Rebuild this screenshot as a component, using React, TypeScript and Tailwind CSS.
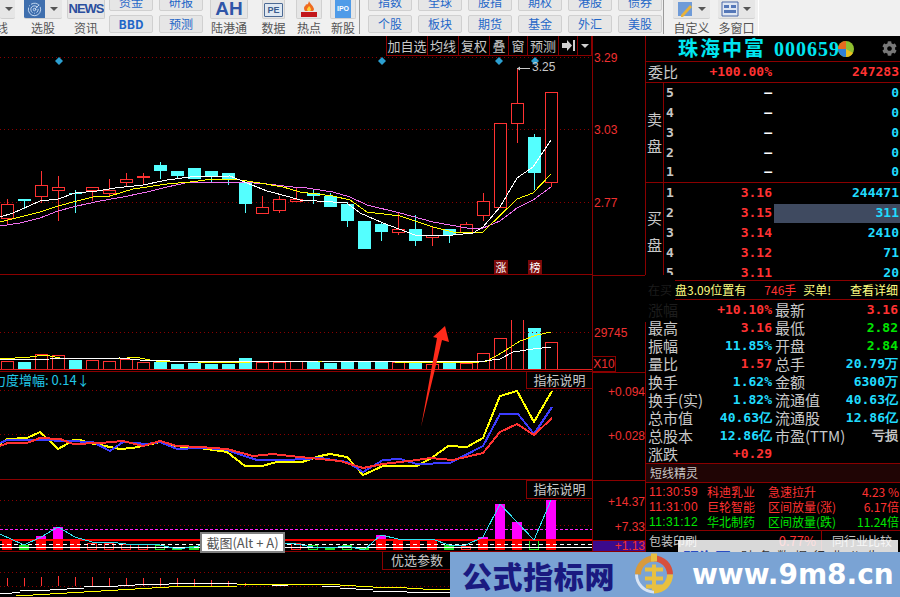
import { Radar } from 'lucide-react';
import { FaCog } from 'react-icons/fa';

type Pt = [number, number];

const CJK = "font-['Noto_Sans_CJK_SC','Liberation_Sans',sans-serif]";
const NUM = "font-['DejaVu_Sans_Mono','Liberation_Mono',monospace] font-bold";

// x, wickTop, wickBottom, bodyTop, bodyBottom, up
const CANDLES: [number, number, number, number, number, boolean][] = [
  [7, 199, 224, 204, 218, true],
  [24, 199, 209, 199, 201, false],
  [41, 171, 203, 185, 196, true],
  [58, 176, 221, 187, 190, true],
  [75, 190, 213, 193, 194, false],
  [92, 187, 201, 187, 190, true],
  [109, 179, 196, 190, 193, true],
  [126, 173, 187, 179, 182, true],
  [143, 173, 185, 176, 177, true],
  [160, 162, 179, 165, 171, false],
  [177, 171, 178, 171, 176, false],
  [194, 168, 179, 168, 179, false],
  [211, 171, 182, 171, 176, false],
  [228, 173, 185, 173, 179, false],
  [245, 182, 213, 182, 204, false],
  [262, 196, 213, 207, 213, true],
  [279, 196, 213, 199, 210, true],
  [296, 187, 200, 199, 201, true],
  [313, 190, 204, 193, 196, false],
  [330, 193, 207, 196, 207, false],
  [347, 202, 227, 204, 221, false],
  [364, 221, 249, 221, 249, false],
  [381, 222, 241, 224, 232, false],
  [398, 213, 235, 229, 232, true],
  [415, 215, 246, 229, 241, false],
  [432, 227, 246, 235, 237, true],
  [449, 229, 243, 229, 235, false],
  [466, 222, 234, 224, 232, true],
  [483, 193, 221, 201, 215, true],
  [500, 123, 207, 123, 207, true],
  [517, 68, 143, 103, 123, true],
  [534, 134, 190, 137, 173, false],
  [551, 92, 187, 92, 182, true],
];

const MA_WHITE: Pt[] = [[0, 217], [13, 213], [40, 201], [58, 199], [75, 193], [97, 191], [115, 188], [143, 185], [167, 180], [190, 177], [230, 176], [247, 183], [267, 191], [290, 197], [300, 200], [333, 202], [347, 203], [360, 213], [383, 223], [415, 235], [443, 236], [473, 233], [483, 227], [500, 207], [517, 178], [533, 167], [551, 140]];
const MA_YELLOW: Pt[] = [[0, 222], [20, 217], [40, 212], [58, 206], [77, 201], [93, 197], [110, 196], [133, 189], [167, 184], [190, 182], [213, 179], [240, 180], [260, 183], [283, 187], [300, 192], [333, 196], [350, 200], [367, 212], [400, 216], [433, 227], [453, 232], [483, 232], [517, 199], [533, 193], [551, 174]];
const MA_PINK: Pt[] = [[0, 226], [20, 223], [40, 218], [58, 211], [77, 206], [100, 201], [123, 197], [147, 192], [167, 187], [190, 182], [240, 182], [267, 184], [293, 187], [300, 187], [333, 192], [350, 197], [367, 205], [400, 213], [433, 222], [467, 228], [483, 228], [500, 221], [517, 208], [533, 200], [551, 187]];

// x, top, up
const VOLUMES: [number, number, boolean][] = [
  [7, 362, true], [24, 363, false], [41, 355, true], [58, 356, true], [75, 361, false], [92, 361, true], [109, 362, true], [126, 360, true], [143, 363, true],
  [160, 363, false], [177, 365, false], [194, 364, false], [211, 365, false], [228, 365, false], [245, 359, false], [262, 363, true], [279, 363, true], [296, 362, true],
  [313, 363, false], [330, 364, false], [347, 363, false], [364, 363, false], [381, 363, false], [398, 363, true], [415, 363, false], [432, 365, true], [449, 363, false],
  [466, 364, true], [483, 354, true], [500, 339, true], [517, 310, true], [534, 329, false], [551, 343, true],
];

const VOL_YELLOW: Pt[] = [[0, 360], [15, 359], [30, 358], [45, 356], [60, 359], [120, 360], [135, 358], [155, 362], [240, 364], [260, 362], [320, 362], [470, 364], [487, 362], [503, 353], [520, 342], [537, 336], [551, 333]];
const VOL_WHITE: Pt[] = [[0, 361], [50, 360], [120, 359], [140, 361], [200, 363], [320, 362], [477, 363], [500, 360], [513, 353], [533, 350], [551, 348]];

const LINE_YELLOW: Pt[] = [[0, 445], [7, 440], [27, 439], [40, 433], [50, 442], [58, 450], [67, 445], [73, 441], [80, 441], [90, 444], [100, 446], [120, 450], [133, 449], [147, 446], [160, 443], [173, 447], [200, 449], [227, 453], [245, 467], [262, 467], [277, 463], [302, 463], [320, 457], [330, 455], [347, 458], [363, 476], [383, 467], [417, 467], [433, 458], [448, 447], [467, 448], [483, 439], [500, 397], [517, 392], [534, 423], [552, 392]];
const LINE_BLUE: Pt[] = [[0, 444], [7, 441], [40, 441], [67, 442], [93, 443], [110, 452], [123, 443], [147, 445], [160, 443], [177, 450], [200, 449], [223, 450], [257, 461], [287, 461], [320, 459], [347, 463], [363, 473], [383, 461], [400, 460], [417, 465], [450, 464], [483, 447], [500, 415], [518, 415], [534, 435], [552, 408]];
const LINE_RED: Pt[] = [[0, 447], [8, 444], [27, 444], [40, 439], [60, 440], [73, 445], [100, 444], [123, 442], [143, 447], [160, 442], [177, 447], [200, 448], [227, 450], [253, 457], [273, 455], [290, 457], [320, 460], [340, 462], [363, 469], [383, 465], [417, 461], [430, 459], [453, 461], [483, 454], [500, 433], [517, 425], [534, 436], [552, 419]];

// x, top, kind, magenta top
type Bar = 'fill' | 'hollow' | 'green' | 'greenHollow';
const PANE4_BARS: [number, number, Bar, number?][] = [
  [7, 541, 'fill'], [24, 546, 'green'], [41, 541, 'fill', 537], [58, 541, 'fill', 528], [75, 541, 'fill'], [92, 544, 'hollow'], [109, 544, 'hollow'], [126, 545, 'hollow'], [143, 545, 'hollow'],
  [160, 546, 'greenHollow'], [177, 548, 'green'], [194, 547, 'green'], [296, 544, 'hollow'], [313, 546, 'greenHollow'], [330, 548, 'green'], [347, 546, 'greenHollow'], [364, 549, 'green'],
  [381, 541, 'fill', 536], [398, 541, 'fill'], [415, 541, 'fill'], [432, 541, 'fill'], [449, 546, 'green'], [466, 547, 'hollow'], [483, 541, 'fill', 538], [500, 541, 'fill', 505], [517, 541, 'fill', 523],
  [534, 541, 'greenHollow'], [551, 541, 'fill', 501],
];

const PANE4_LINE: Pt[] = [[0, 535], [24, 546], [41, 538], [58, 528], [75, 538], [92, 543], [109, 543], [126, 545], [143, 545], [160, 546], [177, 550], [194, 548], [211, 544], [296, 545], [313, 548], [330, 549], [347, 547], [364, 551], [381, 536], [398, 540], [432, 540], [449, 546], [466, 546], [483, 538], [500, 505], [517, 523], [534, 541], [551, 501]];

// from, to, y
const P5_WHITE: [number, number, number][] = [[0, 12, 594], [12, 20, 593], [20, 33, 591], [33, 50, 591], [50, 67, 590], [67, 84, 589], [84, 118, 587], [118, 135, 586], [135, 169, 585], [169, 237, 584], [272, 288, 586], [322, 340, 587], [340, 356, 589], [356, 373, 590], [373, 407, 592], [407, 458, 593]];
const P5_YELLOW: [number, number, number][] = [[16, 33, 596], [33, 50, 595], [50, 67, 594], [67, 84, 593], [84, 101, 592], [101, 118, 591], [118, 135, 590], [135, 152, 589], [152, 169, 588], [169, 203, 587], [203, 237, 587], [237, 288, 585], [288, 340, 585], [340, 356, 586], [356, 373, 587], [373, 407, 588], [407, 423, 589], [423, 458, 590]];
const P5_STICKS: Pt[] = [[7, 579], [24, 579], [41, 578], [58, 577], [75, 578], [92, 578], [109, 579], [126, 579], [143, 579], [160, 579], [177, 579], [194, 580], [211, 581], [228, 582], [245, 584]];

function Line({ points, color, width = 1 }: { points: Pt[]; color: string; width?: number }) {
  return <polyline points={points.map(([x, y]) => `${x},${y}`).join(' ')} fill="none" stroke={color} strokeWidth={width} shapeRendering="crispEdges" />;
}

function Dotted({ y }: { y: number }) {
  return <line x1="0" x2="592" y1={y + 0.5} y2={y + 0.5} stroke="#8a0000" strokeDasharray="1 3" />;
}

function ToolButton({ label, className = '' }: { label: string; className?: string }) {
  return (
    <div className={`flex h-[18px] w-[44px] items-center justify-center rounded-[2px] border border-[#d0d0d0] bg-[#e6e6e6] text-[12px] text-[#1f66c8] ${CJK} ${className}`}>
      {label}
    </div>
  );
}

function ToolColumn({ top, bottom, bold }: { top: string; bottom: string; bold?: boolean }) {
  return (
    <div className="-mt-[7px] flex flex-col gap-[4px]">
      <ToolButton label={top} />
      <ToolButton label={bottom} className={bold ? "font-['Liberation_Serif',serif] font-bold" : ''} />
    </div>
  );
}

function ToolLabel({ label }: { label: string }) {
  return <span className={`mt-[2px] whitespace-nowrap text-[12px] leading-[14px] text-[#555] ${CJK}`}>{label}</span>;
}

function ToolIcon({ label, className, children }: { label: string; className: string; children: React.ReactNode }) {
  return (
    <div className={`flex flex-col items-center ${className}`}>
      <div className="flex h-[19px] w-full items-center justify-center overflow-hidden rounded-b-[2px] border border-t-0 border-[#d0d0d0] bg-[#e6e6e6]">
        {children}
      </div>
      <ToolLabel label={label} />
    </div>
  );
}

function WindowButton({ label, children }: { label: string; children: React.ReactNode }) {
  return (
    <div className="flex w-[37px] flex-col items-center">
      <div className="flex h-[19px] w-full items-center overflow-hidden rounded-b-[2px] border-b border-[#d0d0d0] bg-[#e6e6e6] px-[3px]">
        <svg width="18" height="18" viewBox="0 0 18 18">{children}</svg>
        <span className="ml-[4px] h-0 w-0 border-x-[4px] border-t-[4px] border-x-transparent border-t-[#555]" />
      </div>
      <ToolLabel label={label} />
    </div>
  );
}

function Toolbar() {
  return (
    <div className="flex h-[36px] shrink-0 items-start overflow-hidden bg-[#f0f0f0]">
      <div className="flex w-[19px] flex-col items-start">
        <div className="flex h-[19px] w-[15px] items-center justify-end rounded-b-[2px] border-b border-[#d0d0d0] bg-[#e6e6e6] pr-[2px]">
          <span className="h-0 w-0 border-x-[4px] border-t-[4px] border-x-transparent border-t-[#555]" />
        </div>
        <span className={`-ml-[4px] mt-[2px] whitespace-nowrap text-[12px] leading-[14px] text-[#555] ${CJK}`}>线</span>
      </div>
      <div className="ml-[4px] flex w-[40px] flex-col items-center">
        <div className="flex h-[19px] w-[38px] items-center overflow-hidden rounded-b-[2px] border-b border-[#d0d0d0] bg-[#e6e6e6]">
          <div className="flex h-[18px] w-[21px] items-center justify-center bg-[#3f6fae]">
            <Radar size={15} color="#c8dcf2" strokeWidth={1.5} />
          </div>
          <span className="ml-[5px] h-0 w-0 border-x-[4px] border-t-[4px] border-x-transparent border-t-[#555]" />
        </div>
        <ToolLabel label="选股" />
      </div>
      <ToolIcon label="资讯" className="ml-[4px] w-[38px]">
        <span className="font-['Liberation_Sans',sans-serif] text-[13px] font-bold tracking-[-1px] text-[#2b4f9e]">NEWS</span>
      </ToolIcon>
      <div className="ml-[4px] flex gap-[6px]">
        <ToolColumn top="资金" bottom="BBD" bold />
        <ToolColumn top="研报" bottom="预测" />
      </div>
      <ToolIcon label="陆港通" className="ml-[7px] w-[38px]">
        <span className="font-['Liberation_Sans',sans-serif] text-[19px] font-bold text-[#2f55a8]">AH</span>
      </ToolIcon>
      <ToolIcon label="数据" className="ml-[14px] w-[23px]">
        <span className="mt-[1px] rounded-[1px] border border-[#4c6a94] bg-[#dfe8f2] px-[2px] font-['Liberation_Sans',sans-serif] text-[9px] font-bold leading-[12px] text-[#3a5c8e]">PE</span>
      </ToolIcon>
      <ToolIcon label="热点" className="ml-[11px] w-[26px]">
        <svg width="20" height="18" viewBox="0 0 20 18">
          <path d="M10 1c1 3 4 4 5 8 0 1-1 2-1 2H6s-1-1-1-3c0-2 2-2 2-4 1 1 2 1 3-3z" fill="#ef6a1e" />
          <path d="M10 6c1 1 2 2 2 4l-1 1H9l-1-1c0-2 1-2 2-4z" fill="#ffd23c" />
          <rect x="2" y="12" width="16" height="5" fill="#c2161b" />
        </svg>
      </ToolIcon>
      <ToolIcon label="新股" className="ml-[8px] w-[26px]">
        <span className="flex h-[18px] w-[16px] items-center justify-center bg-[#4f9be8] font-['Liberation_Sans',sans-serif] text-[7px] font-bold text-white">IPO</span>
      </ToolIcon>
      <div className="ml-[3px] mr-[8px] h-[34px] w-[1px] bg-[#9a9a9a]" />
      <div className="flex gap-[6px]">
        <ToolColumn top="指数" bottom="个股" />
        <ToolColumn top="全球" bottom="板块" />
        <ToolColumn top="股指" bottom="期货" />
        <ToolColumn top="期权" bottom="基金" />
        <ToolColumn top="港股" bottom="外汇" />
        <ToolColumn top="债券" bottom="美股" />
      </div>
      <div className="ml-[1px] mr-[9px] h-[34px] w-[1px] bg-[#9a9a9a]" />
      <div className="flex gap-[8px]">
        <WindowButton label="自定义">
          <path d="M2 2h14v14H2z" fill="#6f9bd8" />
          <path d="M5 15l9-10 2 2-9 10H5z" fill="#e8b23a" />
        </WindowButton>
        <WindowButton label="多窗口">
          <path d="M1 2h16v14H1z" fill="#dfe6f2" stroke="#4a68a8" />
          <path d="M3 5h5v3H3zM10 5h5v3h-5zM3 10h12v3H3z" fill="#5577b8" />
        </WindowButton>
      </div>
      <div className="ml-[3px] h-[36px] w-[1px] bg-white" />
    </div>
  );
}

function ChartTabs() {
  const tabs = [
    ['加自选', 'w-[41px]'],
    ['均线', 'w-[31px]'],
    ['复权', 'w-[31px]'],
    ['叠', 'w-[19px]'],
    ['窗', 'w-[19px]'],
    ['预测', 'w-[31px]'],
  ];
  return (
    <div className={`absolute right-0 top-0 flex h-[20px] border-b border-[#8a0000] bg-black text-[13px] leading-[19px] text-[#c8c8c8] ${CJK}`}>
      {tabs.map(([t, w]) => (
        <div key={t} className={`border-l border-[#8a0000] text-center ${w}`}>
          {t}
        </div>
      ))}
      <div className="flex w-[19px] items-center justify-center border-l border-[#8a0000]">
        <svg width="13" height="11" viewBox="0 0 13 11">
          <path d="M0 3h5V0l5 5.5L5 11V8H0z" fill="#d0d0d0" />
          <rect x="11" y="0" width="2" height="11" fill="#d0d0d0" />
        </svg>
      </div>
      <div className="flex w-[15px] items-center justify-center border-x border-[#8a0000]">
        <span className="h-0 w-0 border-x-[4px] border-t-[4px] border-x-transparent border-t-[#d0d0d0]" />
      </div>
    </div>
  );
}

function BoxLabel({ label, className }: { label: string; className: string }) {
  return (
    <div className={`absolute border border-[#8a0000] bg-black text-center text-[13px] leading-[16px] text-[#c8c8c8] ${CJK} ${className}`}>
      {label}
    </div>
  );
}

function Diamond({ x }: { x: number }) {
  return <polygon points={`${x},57 ${x + 4},61 ${x},65 ${x - 4},61`} fill="#2c9fd0" />;
}

function PricePane() {
  return (
    <div className="relative h-[239px] border-b border-[#8a0000]">
      <svg width="592" height="238" viewBox="0 36 592 238" className="block">
        <Dotted y={57} />
        <Dotted y={129} />
        <Dotted y={202} />
        {[59, 382, 499, 535].map((x) => (
          <Diamond key={x} x={x} />
        ))}
        {CANDLES.map(([x, wt, wb, bt, bb, up]) => (
          <g key={x} shapeRendering="crispEdges">
            <line x1={x + 0.5} x2={x + 0.5} y1={wt} y2={wb} stroke={up ? '#ff3232' : '#54ffff'} />
            {up ? (
              <rect x={x - 5.5} y={bt + 0.5} width="12" height={Math.max(bb - bt, 1)} fill="#000" stroke="#ff3232" />
            ) : (
              <rect x={x - 6} y={bt} width="13" height={Math.max(bb - bt, 1)} fill="#54ffff" />
            )}
          </g>
        ))}
        <Line points={MA_PINK} color="#f070f0" />
        <Line points={MA_YELLOW} color="#ffff00" />
        <Line points={MA_WHITE} color="#ffffff" />
        <path d="M517 68.5h13" stroke="#c8c8c8" />
        <path d="M517 68.5l3-2v4z" fill="#c8c8c8" />
      </svg>
      <ChartTabs />
      <span className="absolute left-[532px] top-[24px] font-['Liberation_Sans',sans-serif] text-[12px] leading-[14px] text-[#c8c8c8]">3.25</span>
      <span className={`absolute left-[494px] top-[224px] h-[14px] w-[14px] bg-[#7a0a0a] text-center text-[11px] leading-[14px] text-white ${CJK}`}>涨</span>
      <span className={`absolute left-[528px] top-[224px] h-[14px] w-[14px] bg-[#7a0a0a] text-center text-[11px] leading-[14px] text-white ${CJK}`}>榜</span>
    </div>
  );
}

function VolumePane() {
  return (
    <div className="relative h-[97px] border-b border-[#8a0000]">
      <svg width="592" height="96" viewBox="0 276 592 96" className="block">
        {VOLUMES.map(([x, top, up]) =>
          up ? (
            <rect key={x} x={x - 5.5} y={top + 0.5} width="12" height={370 - top} fill="#000" stroke="#ff3232" shapeRendering="crispEdges" />
          ) : (
            <rect key={x} x={x - 6} y={top} width="13" height={371 - top} fill="#54ffff" shapeRendering="crispEdges" />
          ),
        )}
        <rect x="0" y="276" width="592" height="45" fill="#000" />
        <Dotted y={333} />
        <Line points={VOL_YELLOW} color="#ffff00" />
        <Line points={VOL_WHITE} color="#ffffff" />
        <line x1="0" x2="592" y1="370.5" y2="370.5" stroke="#e02020" />
      </svg>
    </div>
  );
}

function StrengthPane() {
  return (
    <div className="relative h-[108px] border-b border-[#8a0000]">
      <svg width="592" height="107" viewBox="0 373 592 107" className="block">
        <Dotted y={391} />
        <Dotted y={435} />
        <Line points={LINE_YELLOW} color="#ffff00" width={2} />
        <Line points={LINE_BLUE} color="#3c3cff" width={2} />
        <Line points={LINE_RED} color="#ff3232" width={2} />
      </svg>
      <span className={`absolute left-[-7px] top-0 whitespace-nowrap text-[13px] leading-[16px] text-[#20c8e8] ${CJK}`}>力度增幅: 0.14↓</span>
      <BoxLabel label="指标说明" className="right-0 top-[-1px] h-[18px] w-[66px] border-r-0" />
    </div>
  );
}

function SignalPane() {
  return (
    <div className="relative h-[72px] border-b border-[#8a0000]">
      <svg width="592" height="71" viewBox="0 481 592 71" className="block">
        <Dotted y={501} />
        <Dotted y={526} />
        <line x1="0" x2="592" y1="530.5" y2="530.5" stroke="#ff20ff" strokeDasharray="3 2" />
        {PANE4_BARS.map(([x, top, kind, extra]) => (
          <g key={x} shapeRendering="crispEdges">
            {extra ? <rect x={x - 5} y={extra} width="10" height={541 - extra} fill="#ff00ff" /> : null}
            {kind === 'fill' ? <rect x={x - 5} y={top} width="10" height={551 - top} fill="#ff0000" /> : null}
            {kind === 'green' ? <rect x={x - 5} y={top} width="10" height={551 - top} fill="#20e020" /> : null}
            {kind === 'hollow' ? <rect x={x - 4.5} y={top + 0.5} width="9" height={550 - top} fill="none" stroke="#ff2020" /> : null}
            {kind === 'greenHollow' ? <rect x={x - 4.5} y={top + 0.5} width="9" height={550 - top} fill="none" stroke="#20e020" /> : null}
          </g>
        ))}
        <line x1="0" x2="592" y1="541" y2="541" stroke="#ff0000" strokeWidth="2" />
        <line x1="0" x2="592" y1="545.5" y2="545.5" stroke="#ffffff" strokeDasharray="4 3" />
        <line x1="0" x2="592" y1="548.5" y2="548.5" stroke="#ffffff" />
        <Line points={PANE4_LINE} color="#30e0f0" />
      </svg>
      <BoxLabel label="指标说明" className="right-0 top-0 h-[19px] w-[66px] border-r-0" />
      <div className={`absolute left-[200px] top-[52px] z-10 flex h-[21px] w-[85px] items-center justify-center whitespace-nowrap border-2 border-[#808080] bg-white text-[13px] text-[#555] ${CJK}`}>
        截图(Alt + A)
      </div>
    </div>
  );
}

function TrendPane() {
  return (
    <div className="relative min-h-0 flex-1">
      <svg width="592" height="44" viewBox="0 553 592 44" className="block">
        <Dotted y={573} />
        <Dotted y={587} />
        {P5_STICKS.map(([x, top]) => (
          <line key={x} x1={x + 0.5} x2={x + 0.5} y1={top} y2={587} stroke="#ff3232" />
        ))}
        <g shapeRendering="crispEdges">
          {P5_YELLOW.map(([a, b, y]) => (
            <line key={a} x1={a} x2={b} y1={y + 0.5} y2={y + 0.5} stroke="#ffff00" />
          ))}
          {P5_WHITE.map(([a, b, y]) => (
            <line key={a} x1={a} x2={b} y1={y + 0.5} y2={y + 0.5} stroke="#ffffff" />
          ))}
        </g>
      </svg>
      <BoxLabel label="优选参数" className="left-[382px] top-0 h-[18px] w-[70px] border-t-0" />
    </div>
  );
}

function AxisLabel({ text, y, left }: { text: string; y: number; left?: boolean }) {
  return (
    <span
      className={`absolute font-['Liberation_Sans',sans-serif] text-[12px] leading-[14px] text-[#f03030] ${left ? 'left-[1px]' : 'right-0'}`}
      style={{ top: y - 36 - 7 }}
    >
      {text}
    </span>
  );
}

function PriceAxis() {
  return (
    <div className="relative w-[53px] shrink-0 border-l border-[#8a0000]">
      <AxisLabel text="3.29" y={58} left />
      <AxisLabel text="3.03" y={130} left />
      <AxisLabel text="2.77" y={203} left />
      <div className="absolute left-0 right-0 top-[239px] h-[1px] bg-[#8a0000]" />
      <AxisLabel text="29745" y={333} left />
      <div className="absolute left-0 top-[320px] h-[16px] w-[23px] border border-l-0 border-[#8a0000] text-center font-['Liberation_Sans',sans-serif] text-[12px] leading-[14px] text-[#f03030]">
        X10
      </div>
      <div className="absolute left-0 right-0 top-[336px] h-[1px] bg-[#8a0000]" />
      <AxisLabel text="+0.094" y={392} />
      <AxisLabel text="+0.028" y={436} />
      <div className="absolute left-0 right-0 top-[444px] h-[1px] bg-[#8a0000]" />
      <AxisLabel text="+14.37" y={502} />
      <AxisLabel text="+7.33" y={527} />
      <div className="absolute left-0 right-0 top-[504px] flex h-[12px] items-center justify-end border-y border-[#8a0000] bg-[#3c0a8c] font-['Liberation_Sans',sans-serif] text-[12px] text-[#f03030]">
        +1.13
      </div>
    </div>
  );
}

const SELL = ['5', '4', '3', '2', '1'];
const BUY = [
  ['1', '3.16', '244471'],
  ['2', '3.15', '311'],
  ['3', '3.14', '2410'],
  ['4', '3.12', '71'],
  ['5', '3.11', '20'],
];

const STATS: [string, string, string, string, string, string][] = [
  ['涨幅', '+10.10%', 'text-[#ff3232]', '最新', '3.16', 'text-[#ff3232]'],
  ['最高', '3.16', 'text-[#ff3232]', '最低', '2.82', 'text-[#00e600]'],
  ['振幅', '11.85%', 'text-[#20dcff]', '开盘', '2.84', 'text-[#00e600]'],
  ['量比', '1.57', 'text-[#ff3232]', '总手', '20.79万', 'text-[#20dcff]'],
  ['换手', '1.62%', 'text-[#20dcff]', '金额', '6300万', 'text-[#20dcff]'],
  ['换手(实)', '1.82%', 'text-[#20dcff]', '流通值', '40.63亿', 'text-[#20dcff]'],
  ['总市值', '40.63亿', 'text-[#20dcff]', '流通股', '12.86亿', 'text-[#20dcff]'],
  ['总股本', '12.86亿', 'text-[#20dcff]', '市盈(TTM)', '亏损', 'text-[#c8c8c8]'],
  ['涨跌', '+0.29', 'text-[#ff3232]', '', '', ''],
];

const SPIRIT = [
  ['11:30:59', '科迪乳业', '急速拉升', '4.23 %', 'text-[#ff3232]'],
  ['11:31:00', '巨轮智能', '区间放量(涨)', '6.17倍', 'text-[#ff3232]'],
  ['11:31:12', '华北制药', '区间放量(跌)', '11.24倍', 'text-[#00e600]'],
];

function QuotePanel() {
  return (
    <div className="relative flex w-[255px] shrink-0 flex-col border-l border-[#8a0000] bg-black">
      <div className="flex h-[25px] shrink-0 items-center">
        <span className="ml-[32px] whitespace-nowrap font-['Liberation_Serif','Noto_Sans_CJK_SC',serif] text-[20px] font-bold tracking-[2px] text-[#00e6f0]">珠海中富</span>
        <span className="ml-[8px] font-['Liberation_Serif',serif] text-[20px] font-bold tracking-[1px] text-[#00e6f0]">000659</span>
        <svg width="16" height="16" viewBox="0 0 16 16" className="-ml-[2px]">
          <circle cx="8" cy="8" r="8" fill="#8fbf30" />
          <path d="M8 8L8 0A8 8 0 0 0 0 8z" fill="#e86a20" />
          <path d="M8 8L0 8A8 8 0 0 0 8 16z" fill="#2f80d8" />
          <path d="M8 8L8 16A8 8 0 0 0 15 12z" fill="#e8c020" />
        </svg>
        <FaCog size={15} color="#777" className="ml-[28px]" />
      </div>
      <div className="flex h-[22px] shrink-0 items-center border-y border-[#8a0000] pr-[1px]">
        <span className={`ml-[2px] w-[50px] text-[15px] leading-[20px] text-[#c8c8c8] ${CJK}`}>委比</span>
        <span className={`w-[74px] text-right text-[13px] text-[#ff3232] ${NUM}`}>+100.00%</span>
        <span className={`flex-1 text-right text-[13px] text-[#ff3232] ${NUM}`}>247283</span>
      </div>
      <div className="flex h-[100px] shrink-0 border-b border-[#8a0000]">
        <div className={`flex w-[18px] flex-col items-center justify-center gap-[9px] border-r border-[#8a0000] text-[15px] leading-[18px] text-[#c8c8c8] ${CJK}`}>
          <span>卖</span>
          <span>盘</span>
        </div>
        <div className="flex flex-1 flex-col">
          {SELL.map((n) => (
            <div key={n} className={`flex h-[20px] items-center text-[13px] ${NUM}`}>
              <span className="ml-[2px] w-[16px] text-[#c8c8c8]">{n}</span>
              <span className="w-[90px] text-right text-[#fff]">—</span>
              <span className="flex-1 pr-[1px] text-right text-[#20dcff]">0</span>
            </div>
          ))}
        </div>
      </div>
      <div className="flex h-[97px] shrink-0 overflow-hidden">
        <div className={`flex w-[18px] flex-col items-center justify-center gap-[9px] border-r border-[#8a0000] text-[15px] leading-[18px] text-[#c8c8c8] ${CJK}`}>
          <span>买</span>
          <span>盘</span>
        </div>
        <div className="flex flex-1 flex-col">
          {BUY.map(([n, price, vol]) => (
            <div key={n} className={`flex h-[20px] shrink-0 items-center text-[13px] ${NUM}`}>
              <span className="ml-[2px] w-[16px] text-[#c8c8c8]">{n}</span>
              <span className="w-[90px] text-right text-[#ff3232]">{price}</span>
              <span className={`ml-[2px] flex h-[19px] flex-1 items-center justify-end pr-[1px] text-[#20dcff] ${n === '2' ? 'bg-[#3f4a60]' : ''}`}>{vol}</span>
            </div>
          ))}
        </div>
      </div>
      <div className={`relative flex h-[20px] shrink-0 items-center whitespace-nowrap border-y border-[#8a0000] text-[12px] text-[#ffff80] ${CJK}`}>
        <div className="absolute -left-[1px] -top-[6px] flex h-[25px] w-[30px] items-end bg-black pb-[1px] pl-[3px] text-[#1c1c1c]">在买</div>
        <div className="absolute -left-[1px] top-[19px] h-[22px] w-[1px] bg-black" />
        <span className="relative ml-[29px]">盘3.09位置有</span>
        <span className="ml-[18px] text-[#ff3232]">746手</span>
        <span className="ml-[7px]">买单!</span>
        <span className="ml-auto pr-[2px]">查看详细</span>
      </div>
      <div className="flex h-[163px] shrink-0 flex-col pt-[1px]">
        {STATS.map(([l1, v1, c1, l2, v2, c2], i) => (
          <div key={l1} className="flex h-[18px] shrink-0 items-center">
            <span className={`ml-[2px] w-[50px] shrink-0 whitespace-nowrap text-[15px] leading-[18px] ${i === 0 ? 'text-[#1c1c1c]' : 'text-[#c8c8c8]'} ${CJK}`}>{l1}</span>
            <span className={`w-[74px] shrink-0 text-right text-[13px] ${NUM} ${c1}`}>{v1}</span>
            <span className={`ml-[3px] w-[55px] shrink-0 whitespace-nowrap text-[15px] leading-[18px] text-[#c8c8c8] ${CJK}`}>{l2}</span>
            <span className={`flex-1 pr-[2px] text-right text-[13px] ${NUM} ${c2}`}>{v2}</span>
          </div>
        ))}
      </div>
      <div className={`flex h-[20px] shrink-0 items-center border-y border-[#8a0000] bg-[#200505] pl-[4px] text-[12px] text-[#c8c8c8] ${CJK}`}>
        短线精灵
      </div>
      <div className="flex h-[47px] shrink-0 flex-col justify-center">
        {SPIRIT.map(([time, name, status, value, color]) => (
          <div key={time} className={`flex h-[15px] items-center whitespace-nowrap text-[12px] ${color} ${CJK}`}>
            <span className="ml-[3px] w-[58px] font-['Liberation_Sans',sans-serif] text-[12px] tracking-[0.4px]">{time}</span>
            <span className="w-[61px]">{name}</span>
            <span>{status}</span>
            <span className="ml-auto pr-[1px]">{value}</span>
          </div>
        ))}
      </div>
      <div className={`flex h-[22px] shrink-0 items-start whitespace-nowrap border-t border-[#8a0000] pt-[2px] text-[12px] leading-[16px] text-[#c8c8c8] ${CJK}`}>
        <span className="ml-[3px] w-[72px]">包装印刷</span>
        <span className="w-[100px] pr-[5px] text-right text-[13px] text-[#ff3232]">0.77%</span>
        <span className="-mt-[2px] h-[22px] border-l border-[#8a0000] pl-[10px] pt-[2px]">同行业比较</span>
      </div>
    </div>
  );
}

function Watermark() {
  return (
    <div className="absolute bottom-0 right-0 flex h-[45px] w-[450px] items-center bg-[#7aa3d4]">
      <span className={`ml-[12px] w-[170px] whitespace-nowrap text-[30px] font-black leading-[40px] tracking-[0.6px] text-[#1a1a80] ${CJK}`}>公式指标网</span>
      <svg width="44" height="45" viewBox="0 0 44 44">
        <path d="M22 3a19 19 0 0 1 19 19h-6a13 13 0 0 0-13-13z" fill="#d8503c" />
        <path d="M3 22a19 19 0 0 1 19-19v6A13 13 0 0 0 9 22z" fill="#d89a3c" />
        <path d="M41 22a19 19 0 0 1-19 19v-6a13 13 0 0 0 13-13z" fill="#e8c040" />
        <path d="M22 41A19 19 0 0 1 3 22h3a16 16 0 0 0 16 16z" fill="#d8e4f4" />
        <path d="M19 1h6v8h-6zM13 15h18v4H13zM20 12h4v26h-4zM13 24h18v4H13zM14 32h16v4H14z" fill="#e8c040" />
      </svg>
      <span className="ml-[16px] whitespace-nowrap font-['DejaVu_Sans',sans-serif] text-[28px] font-bold leading-[40px] text-white">www.9m8.cn</span>
      {/* pale page showing through behind the watermark */}
      <div className="absolute left-[228px] top-[-12px] flex h-[12px] w-[220px] overflow-hidden bg-white/85 pl-[5px] pt-[8px]">
        <span className={`whitespace-nowrap text-[16px] font-bold leading-[18px] text-[#2a4cc0] ${CJK}`}>明海网</span>
        <span className={`ml-[10px] whitespace-nowrap text-[12px] leading-[16px] tracking-[6px] text-[#333] ${CJK}`}>财务数据行业公告</span>
      </div>
    </div>
  );
}

export default function App() {
  return (
    <div className="relative flex h-[597px] w-[900px] flex-col overflow-hidden bg-black">
      <Toolbar />
      <div className="flex min-h-0 flex-1">
        <div className="flex w-[592px] shrink-0 flex-col">
          <PricePane />
          <VolumePane />
          <StrengthPane />
          <SignalPane />
          <TrendPane />
        </div>
        <PriceAxis />
        <QuotePanel />
      </div>
      {/* marker pasted on top of the shot */}
      <svg width="30" height="105" viewBox="0 0 30 105" className="absolute left-[421px] top-[325px]">
        <polygon points="24,1 12,12 16,13 0,102 21,15 28,17" fill="#ff2a1a" />
      </svg>
      <Watermark />
    </div>
  );
}
